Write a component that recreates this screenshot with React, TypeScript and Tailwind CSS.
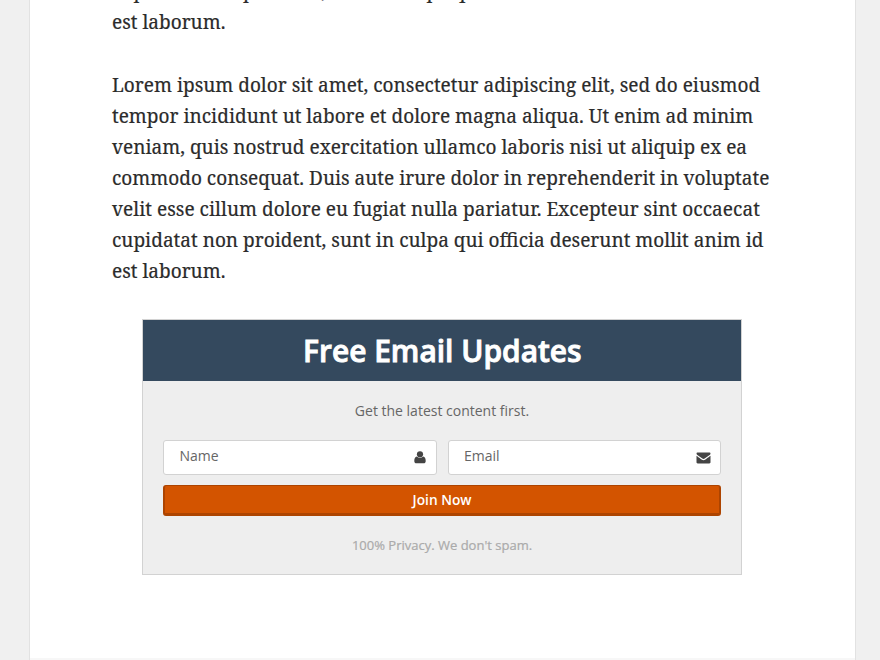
import React from "react";

const lines = [
  "Lorem ipsum dolor sit amet, consectetur adipiscing elit, sed do eiusmod",
  "tempor incididunt ut labore et dolore magna aliqua. Ut enim ad minim",
  "veniam, quis nostrud exercitation ullamco laboris nisi ut aliquip ex ea",
  "commodo consequat. Duis aute irure dolor in reprehenderit in voluptate",
  "velit esse cillum dolore eu fugiat nulla pariatur. Excepteur sint occaecat",
  "cupidatat non proident, sunt in culpa qui officia deserunt mollit anim id",
  "est laborum.",
];

function Paragraph({ rows, className }: { rows: string[]; className: string }) {
  return (
    <p className={`${className} origin-left scale-x-[0.951] font-['Noto_Serif','Liberation_Serif',serif] text-[20px] leading-[31px] text-[#2b2b2b] [-webkit-text-stroke:0.2px_#2b2b2b]`}>
      {rows.map((row) => (
        <span key={row} className={row.startsWith("velit") ? "block whitespace-nowrap tracking-[0.03px] [font-variant-ligatures:normal]" : "block whitespace-nowrap"}>{row}</span>
      ))}
    </p>
  );
}

function UserIcon() {
  return (
    <svg viewBox="0 0 12 13" className="h-[13px] w-3 fill-[#444]">
      <circle cx="6" cy="3.3" r="3.1" />
      <path d="M2.9 5.6C1 5.9.3 7.7.3 9.9c0 1.4.8 2.4 2.1 2.4h7.2c1.3 0 2.1-1 2.1-2.4 0-2.2-.7-4-2.6-4.3A4.3 4.3 0 0 1 6 6.9a4.3 4.3 0 0 1-3.1-1.3Z" />
    </svg>
  );
}

function MailIcon() {
  return (
    <svg viewBox="0 0 15 12" className="h-3 w-[15px] fill-[#444]">
      <path d="M1.4.5h12.2c.6 0 .9.4.9.9 0 .8-.5 1.4-1.2 1.9L9 6.3c-.5.4-1 .8-1.5.8S6.5 6.7 6 6.3L1.7 3.3C1 2.8.5 2.2.5 1.5c0-.6.3-1 .9-1Z" />
      <path d="M.5 3.8c.3.3 4.3 3.1 5.1 3.7.6.4 1.2.8 1.9.8s1.3-.4 1.9-.8c.8-.6 4.8-3.4 5.100-3.700v6.500c0 .7-.5 1.200-1.200 1.200H1.700c-.7 0-1.200-.5-1.200-1.200Z" />
    </svg>
  );
}

export default function App() {
  return (
    <div className="h-[660px] overflow-hidden bg-[#f0f0f0] pr-[24px] pl-[29px]">
      <main className="h-[660px] overflow-hidden border-x border-[#e2e2e2] bg-white px-[82px]">
        <Paragraph rows={lines.slice(5)} className="-mt-[25px]" />
        <Paragraph rows={lines} className="mt-8" />
        <section className="mt-[33px] ml-[30px] h-[256px] w-[600px] border border-[#d2d2d2] bg-[#eee] text-center font-['Open_Sans',sans-serif]">
          <h2 className="h-[61px] bg-[#34495e] text-[31px] leading-[61px] font-semibold text-white [-webkit-text-stroke:0.9px_white]">
            <span className="inline-block scale-x-[0.965]">Free Email Updates</span>
          </h2>
          <p className="mt-[20px] text-[14px] leading-5 text-[#666]">Get the latest content first.</p>
          <div className="mx-5 mt-[19px] flex gap-[11px]">
            <div className="flex h-[35px] w-[274px] items-center justify-between rounded-[3px] border border-[#d2d2d2] bg-white pr-[10px] pl-[15.5px] text-[14px] text-[#666]">
              <span className="pb-1">Name</span>
              <UserIcon />
            </div>
            <div className="flex h-[35px] w-[273px] items-center justify-between rounded-[3px] border border-[#d2d2d2] bg-white pr-[9.5px] pl-[15px] text-[14px] text-[#666]">
              <span className="pb-1">Email</span>
              <MailIcon />
            </div>
          </div>
          <button className="mx-5 mt-[10px] block h-[31px] w-[558px] rounded-[3px] border-x-2 border-t border-b-[3px] border-[#ad4400] bg-[#d35400] text-[14px] leading-[27px] font-semibold text-white">
            <span className="inline-block scale-x-[0.98]">Join Now</span>
          </button>
          <p className="mt-[19px] text-[13px] leading-5 text-[#aaa] [-webkit-text-stroke:0.2px_#aaa]">100% Privacy. We don't spam.</p>
        </section>
        <div className="-mx-[82px] mt-[83px] h-[2px] bg-[#f7f7f7]" />
      </main>
    </div>
  );
}
